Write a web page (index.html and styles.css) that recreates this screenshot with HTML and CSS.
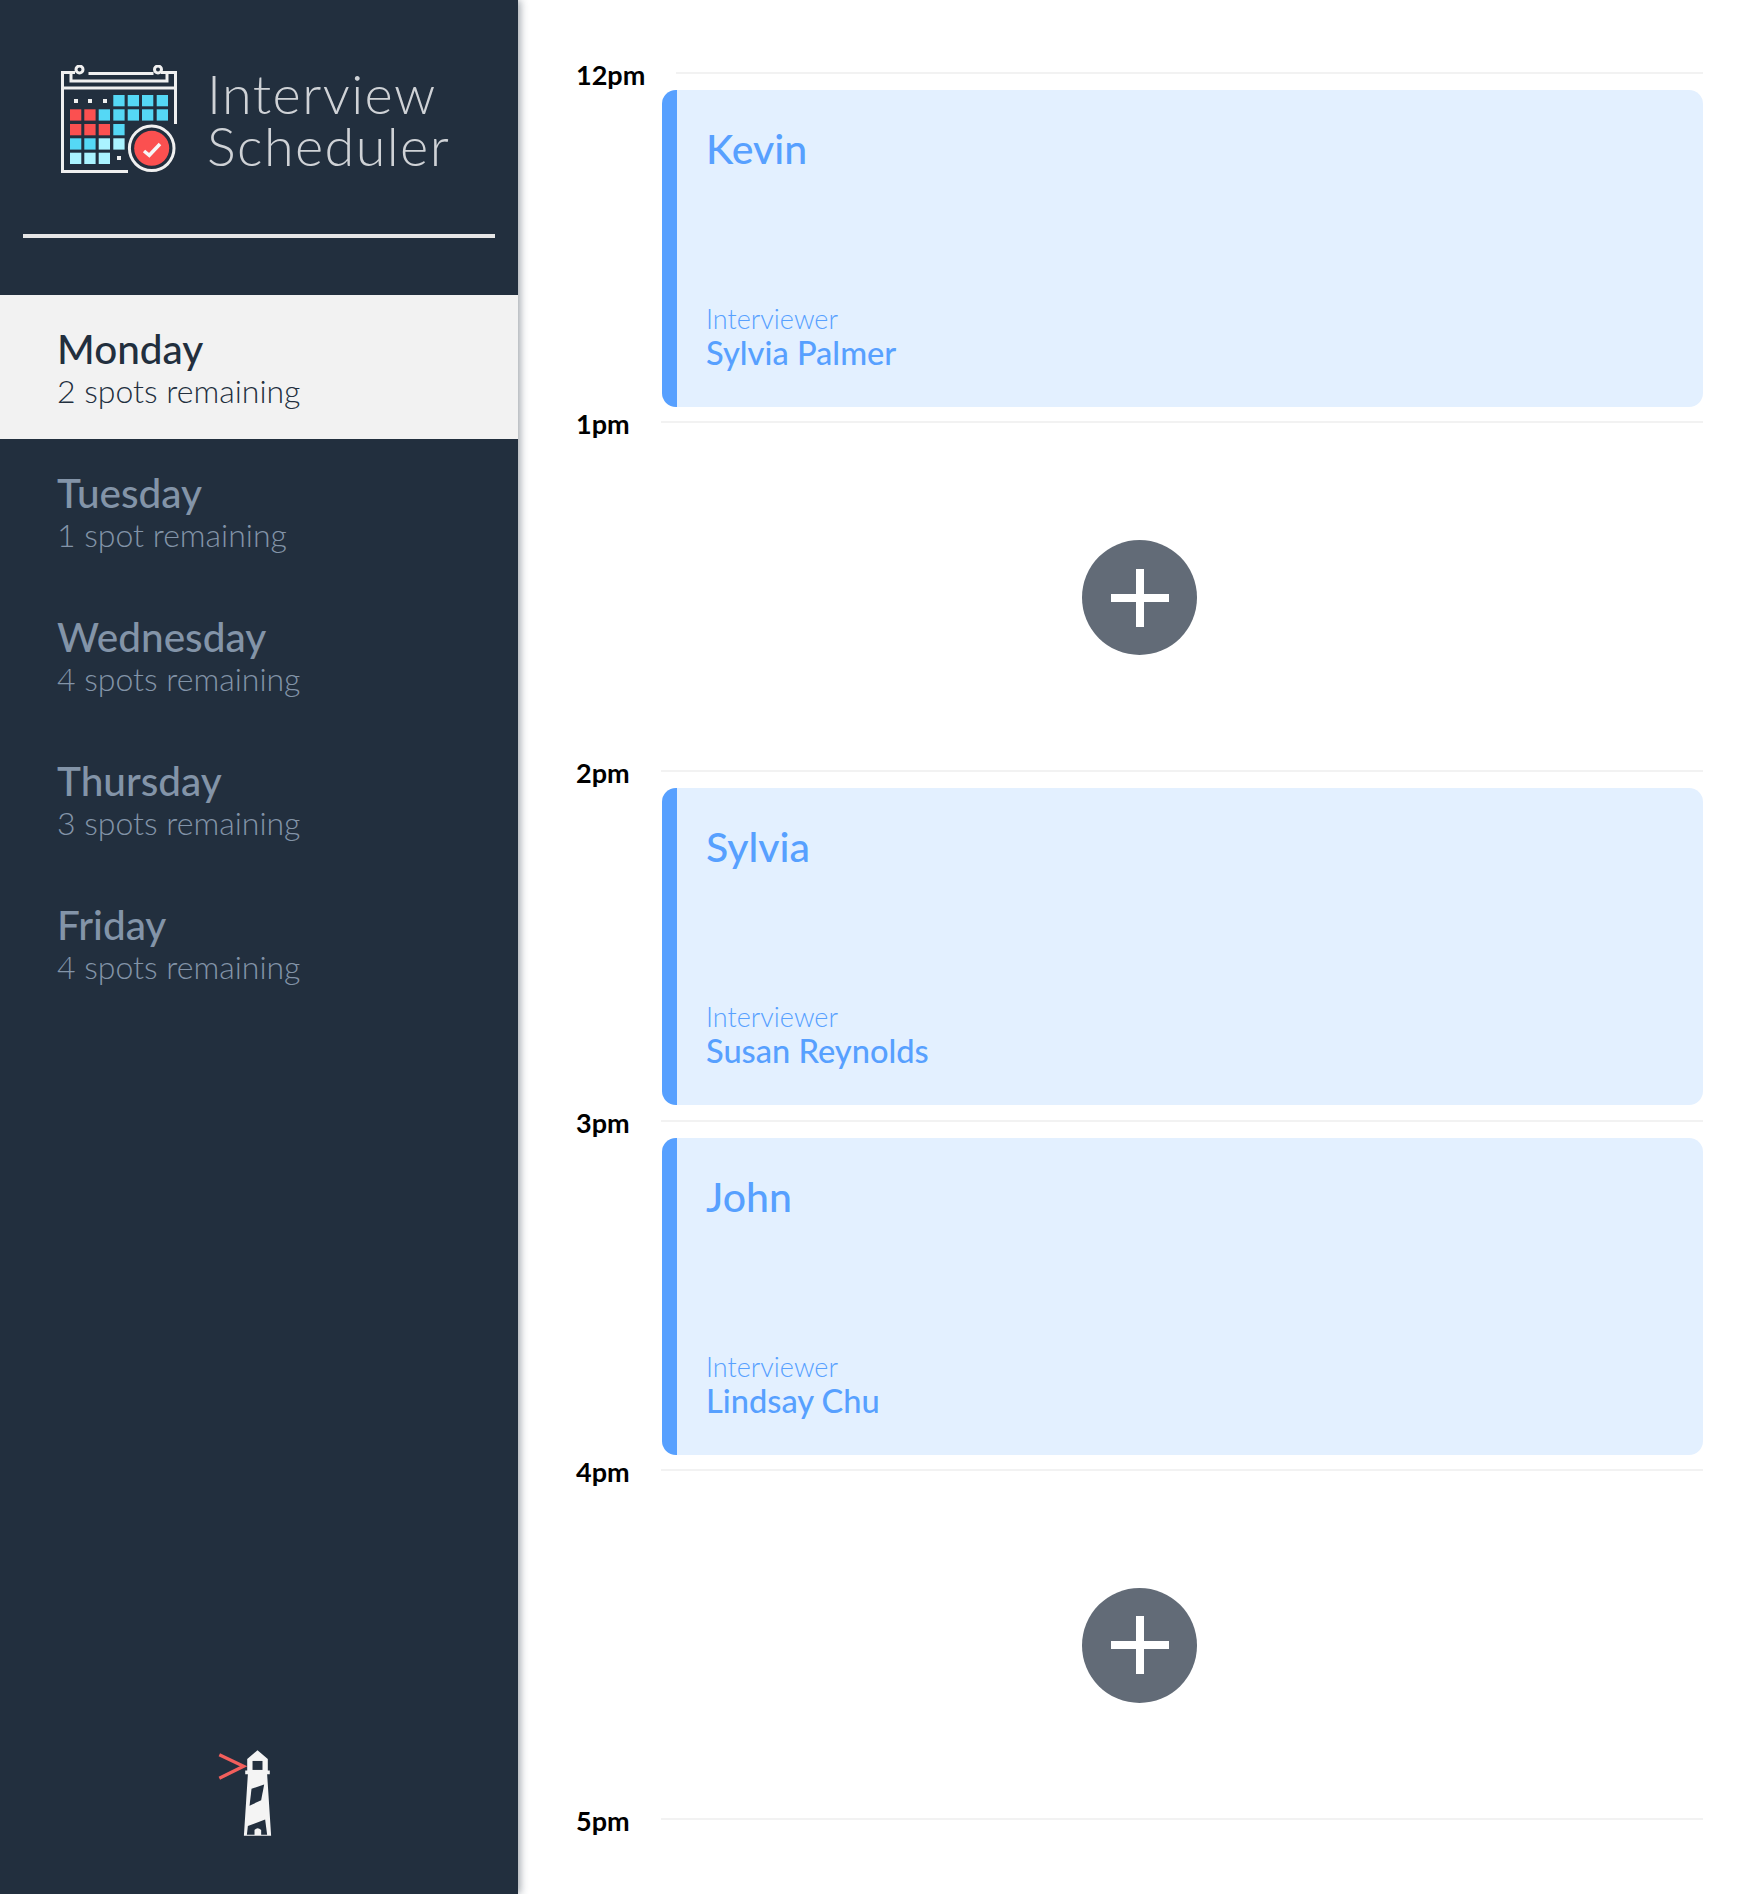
FILE: index.html
```html
<!DOCTYPE html>
<html lang="en">
<head>
    <meta charset="UTF-8">
    <title>Interview Scheduler</title>
    <link rel="stylesheet" href="styles.css">
</head>
<body>
    <!-- Sidebar -->
    <aside class="sidebar">
        <div class="brand">
            <svg class="brand-logo" viewBox="31 25 117 110" width="117" height="110">
                <g fill="none" stroke="#f0f0f0" stroke-width="3">
                    <path d="M45 32.5H32.5V131.5H98"/>
                    <path d="M131 32.5H145.5V84"/>
                    <path d="M32 48H146"/>
                    <path d="M58.5 33.5H123.5"/>
                    <path d="M41 33V41H137V33"/>
                    <circle cx="49.5" cy="29.5" r="3.5"/>
                    <circle cx="128" cy="29.5" r="3.5"/>
                    <circle cx="121.7" cy="108.3" r="22.3"/>
                </g>
                <g fill="#f0f0f0">
                    <rect x="44" y="59" width="4" height="4"/>
                    <rect x="58" y="59" width="4" height="4"/>
                    <rect x="73" y="59" width="4" height="4"/>
                    <rect x="87" y="116" width="4" height="4"/>
                </g>
                <g fill="#55d8f5">
                    <rect x="83.3" y="55" width="11.3" height="11.3"/>
                    <rect x="97.7" y="55" width="11.3" height="11.3"/>
                    <rect x="112" y="55" width="11.3" height="11.3"/>
                    <rect x="126.7" y="55" width="11.3" height="11.3"/>
                    <rect x="68.7" y="69.3" width="11.3" height="11.3"/>
                    <rect x="83.3" y="69.3" width="11.3" height="11.3"/>
                    <rect x="97.7" y="69.3" width="11.3" height="11.3"/>
                    <rect x="112" y="69.3" width="11.3" height="11.3"/>
                    <rect x="126.7" y="69.3" width="11.3" height="11.3"/>
                    <rect x="83.3" y="84" width="11.3" height="11.3"/>
                    <rect x="40" y="98.3" width="11.3" height="11.3"/>
                    <rect x="54.3" y="98.3" width="11.3" height="11.3"/>
                </g>
                <g fill="#fb5050">
                    <rect x="40" y="69.3" width="11.3" height="11.3"/>
                    <rect x="54.3" y="69.3" width="11.3" height="11.3"/>
                    <rect x="40" y="84" width="11.3" height="11.3"/>
                    <rect x="54.3" y="84" width="11.3" height="11.3"/>
                    <rect x="68.7" y="84" width="11.3" height="11.3"/>
                    <circle cx="121.7" cy="108.3" r="17.5"/>
                </g>
                <g fill="#aaf3ff">
                    <rect x="68.7" y="98.3" width="11.3" height="11.3"/>
                    <rect x="83.3" y="98.3" width="11.3" height="11.3"/>
                    <rect x="40" y="112.7" width="11.3" height="11.3"/>
                    <rect x="54.3" y="112.7" width="11.3" height="11.3"/>
                    <rect x="68.7" y="112.7" width="11.3" height="11.3"/>
                </g>
                <path d="M114 111L119.3 115.3L130 104" fill="none" stroke="#f7f7f7" stroke-width="3.5"/>
            </svg>
            <div class="brand-name">Interview<br>Scheduler</div>
        </div>
        <hr class="brand-rule">

        <!-- Days -->
        <nav class="days">
            <div class="day day-active">
                <div class="day-name">Monday</div>
                <div class="day-spots">2 spots remaining</div>
            </div>
            <div class="day">
                <div class="day-name">Tuesday</div>
                <div class="day-spots">1 spot remaining</div>
            </div>
            <div class="day">
                <div class="day-name">Wednesday</div>
                <div class="day-spots">4 spots remaining</div>
            </div>
            <div class="day">
                <div class="day-name">Thursday</div>
                <div class="day-spots">3 spots remaining</div>
            </div>
            <div class="day">
                <div class="day-name">Friday</div>
                <div class="day-spots">4 spots remaining</div>
            </div>
        </nav>

        <svg class="lighthouse" viewBox="41 40 280 265" width="93" height="88">
            <path d="M60 57L133 92L60 128" fill="none" stroke="#f25f5c" stroke-width="10"/>
            <path d="M175 44L206 70V105H212V116H204L216 301H134L146 116H138V105H144V70Z" fill="#f4f4f4"/>
            <rect x="160" y="76" width="30" height="27" fill="#222f3e"/>
            <path d="M157 160L195 147L186 194L151 211Z" fill="#222f3e"/>
            <path d="M146 272L198 252L204 298H186V284Q175 274 166 284V298H143Z" fill="#222f3e"/>
        </svg>
    </aside>

    <!-- Schedule -->
    <main class="schedule">
        <section class="slot">
            <div class="slot-head"><span class="slot-time">12pm</span><span class="slot-line"></span></div>
            <div class="appointment">
                <div class="student">Kevin</div>
                <div>
                    <div class="label">Interviewer</div>
                    <div class="interviewer">Sylvia Palmer</div>
                </div>
            </div>
        </section>

        <section class="slot">
            <div class="slot-head"><span class="slot-time">1pm</span><span class="slot-line"></span></div>
            <div class="empty">
                <div class="add-btn"><svg viewBox="0 0 58 58" width="58" height="58"><path d="M29 0V58M0 29H58" stroke="#fff" stroke-width="8"/></svg></div>
            </div>
        </section>

        <section class="slot">
            <div class="slot-head"><span class="slot-time">2pm</span><span class="slot-line"></span></div>
            <div class="appointment">
                <div class="student">Sylvia</div>
                <div>
                    <div class="label">Interviewer</div>
                    <div class="interviewer">Susan Reynolds</div>
                </div>
            </div>
        </section>

        <section class="slot">
            <div class="slot-head"><span class="slot-time">3pm</span><span class="slot-line"></span></div>
            <div class="appointment">
                <div class="student">John</div>
                <div>
                    <div class="label">Interviewer</div>
                    <div class="interviewer">Lindsay Chu</div>
                </div>
            </div>
        </section>

        <section class="slot">
            <div class="slot-head"><span class="slot-time">4pm</span><span class="slot-line"></span></div>
            <div class="empty">
                <div class="add-btn"><svg viewBox="0 0 58 58" width="58" height="58"><path d="M29 0V58M0 29H58" stroke="#fff" stroke-width="8"/></svg></div>
            </div>
        </section>

        <section class="slot slot-last">
            <div class="slot-head"><span class="slot-time">5pm</span><span class="slot-line"></span></div>
        </section>
    </main>
</body>
</html>
```

FILE: styles.css
```css
/* General Styling */
html, body {
    height: 100%;
}

body {
    margin: 0;
    display: flex;
    overflow: hidden;
    font-family: 'Lato', sans-serif;
    background-color: #fff;
}

/* Sidebar */
.sidebar {
    width: 518px;
    flex-shrink: 0;
    display: flex;
    flex-direction: column;
    background-color: #222f3e;
    box-shadow: 2px 0 8px rgba(34, 47, 62, 0.45);
    position: relative;
}

.brand {
    display: flex;
    align-items: center;
    gap: 29px;
    padding: 65px 0 0 61px;
}

.brand-logo {
    flex-shrink: 0;
}

.brand-name {
    font-size: 54px;
    font-weight: 300;
    line-height: 52px;
    letter-spacing: 1.4px;
    color: #cfd2d6;
}

.brand-rule {
    margin: 59px 23px 0;
    height: 4px;
    border: none;
    background-color: #e6e6e6;
}

.days {
    margin-top: 57px;
}

.day {
    height: 144px;
    box-sizing: border-box;
    padding: 30px 0 0 57px;
    color: #8394a8;
}

.day-active {
    background-color: #f2f2f2;
    color: #222f3e;
}

.day-name {
    font-size: 40.5px;
    font-weight: 500;
    line-height: 48px;
}

.day-spots {
    font-size: 32px;
    font-weight: 300;
    line-height: 36px;
}

.lighthouse {
    margin: auto auto 57px;
}

/* Schedule */
.schedule {
    flex: 1;
    padding: 72px 57px 0 58px;
}

.slot {
    height: 349.2px;
}

.slot-last {
    height: auto;
}

.slot-head {
    display: flex;
    align-items: center;
    gap: 31px;
    height: 2px;
}

.slot-time {
    padding-top: 3px;
    font-size: 27px;
    font-weight: 700;
    color: #000;
}

.slot-line {
    flex: 1;
    height: 2px;
    background-color: #f2f2f2;
}

.appointment {
    height: 317px;
    box-sizing: border-box;
    margin: 16px 0 0 86px;
    padding: 34px 30px 36px 29px;
    display: flex;
    flex-direction: column;
    justify-content: space-between;
    border-left: 15px solid #57a0ff;
    border-radius: 14px;
    background-color: #e3f0ff;
    color: #57a0ff;
}

.student {
    font-size: 41px;
    font-weight: 500;
    line-height: 50px;
}

.label {
    font-size: 27px;
    font-weight: 300;
    line-height: 32px;
}

.interviewer {
    font-size: 32.6px;
    font-weight: 500;
    line-height: 36px;
}

.empty {
    height: 349px;
    display: flex;
    justify-content: center;
    align-items: center;
}

.add-btn {
    width: 115px;
    height: 115px;
    display: flex;
    justify-content: center;
    align-items: center;
    border-radius: 50%;
    background-color: #626b77;
}
```
